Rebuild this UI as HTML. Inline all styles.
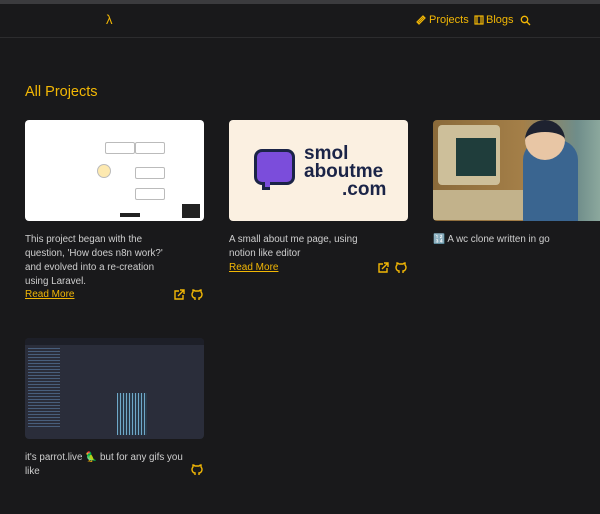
<!DOCTYPE html>
<html><head><style>
*{margin:0;padding:0;box-sizing:border-box}
body{width:600px;height:514px;background:#19191b;font-family:"Liberation Sans",sans-serif;overflow:hidden;position:relative;color:#c9c9c9}
.top{position:absolute;left:0;top:0;width:600px;height:4px;background:#3b3b3e}
.hdr{position:absolute;left:0;top:37px;width:600px;height:1px;background:#2c2c2e}
.y{color:#f2b705}
.abs{position:absolute}
.nav{font-size:11px;top:14px}
h1{position:absolute;left:25px;top:84px;font-size:14.5px;font-weight:normal;color:#f2b705}
.img{position:absolute;border-radius:4px;overflow:hidden}
.desc{position:absolute;font-size:9.8px;line-height:14px;color:#cfcfcf}
.rm{color:#f2b705;text-decoration:underline;font-size:10px;position:absolute}
svg.ic{position:absolute}
</style></head><body>
<div class="top"></div>
<div class="abs y" style="left:106px;top:12px;font-size:13px">λ</div>
<svg class="ic" style="left:416px;top:15px" width="10" height="10" viewBox="0 0 10 10" fill="none" stroke="#f2b705" stroke-width="1.2"><path d="M2 8 L8 2 M1 7 L3 9 L9 3 L7 1 Z"/></svg>
<div class="abs nav y" style="left:429px">Projects</div>
<svg class="ic" style="left:474px;top:15px" width="10" height="10" viewBox="0 0 10 10" fill="none" stroke="#f2b705" stroke-width="1.2"><rect x="1" y="1" width="8" height="8"/><path d="M3 1V9M7 1V9"/></svg>
<div class="abs nav y" style="left:486px">Blogs</div>
<svg class="ic" style="left:520px;top:15px" width="11" height="11" viewBox="0 0 11 11" fill="none" stroke="#f2b705" stroke-width="1.3"><circle cx="4.5" cy="4.5" r="3.2"/><path d="M7 7L10 10"/></svg>
<div class="hdr"></div>
<h1>All Projects</h1>

<div class="img" style="left:25px;top:120px;width:179px;height:101px;background:#fff">
 <div class="abs" style="left:80px;top:22px;width:30px;height:12px;border:1px solid #bbb;border-radius:2px"></div>
 <div class="abs" style="left:110px;top:47px;width:30px;height:12px;border:1px solid #bbb;border-radius:2px"></div>
 <div class="abs" style="left:110px;top:68px;width:30px;height:12px;border:1px solid #bbb;border-radius:2px"></div>
 <div class="abs" style="left:110px;top:22px;width:30px;height:12px;border:1px solid #bbb;border-radius:2px"></div>
 <div class="abs" style="left:72px;top:44px;width:14px;height:14px;border:1px solid #bbb;border-radius:50%;background:#fde9b0"></div>
 <div class="abs" style="left:157px;top:84px;width:18px;height:14px;background:#222"></div>
 <div class="abs" style="left:95px;top:93px;width:20px;height:4px;background:#222"></div>
</div>
<div class="desc" style="left:25px;top:233px;width:143px">This project began with the question, 'How does n8n work?' and evolved into a re-creation using Laravel.</div>
<div class="rm" style="left:25px;top:289px">Read More</div>
<svg class="ic" style="left:173px;top:289px" width="12" height="12" viewBox="0 0 12 12" fill="none" stroke="#f2b705" stroke-width="1.4"><path d="M6 2H2V10H10V6M7 1H11V5M11 1L5 7"/></svg>
<svg class="ic" style="left:191px;top:289px" width="12" height="12" viewBox="0 0 12 12" fill="none" stroke="#f2b705" stroke-width="1.4"><path d="M4 11V9C2 9 1 7 1 5.5 1 4 2 3 2 3 2 2 2 1 2 1 3 1 4 2 4 2H8C8 2 9 1 10 1 10 1 10 2 10 3 10 3 11 4 11 5.5 11 7 10 9 8 9V11"/></svg>

<div class="img" style="left:229px;top:120px;width:179px;height:101px;background:#fbf0e1">
 <div class="abs" style="left:25px;top:29px;width:41px;height:36px;background:#7b4ddb;border:3px solid #1b2447;border-radius:8px"></div>
 <div class="abs" style="left:33px;top:62px;width:8px;height:8px;background:#7b4ddb;border-left:3px solid #1b2447;border-bottom:3px solid #1b2447"></div>
 <div class="abs" style="left:75px;top:25px;font-size:19px;font-weight:bold;line-height:18px;color:#1b2447">smol<br>aboutme<br><span style="padding-left:38px">.com</span></div>
</div>
<div class="desc" style="left:229px;top:233px;width:143px">A small about me page, using notion like editor</div>
<div class="rm" style="left:229px;top:262px">Read More</div>
<svg class="ic" style="left:377px;top:262px" width="12" height="12" viewBox="0 0 12 12" fill="none" stroke="#f2b705" stroke-width="1.4"><path d="M6 2H2V10H10V6M7 1H11V5M11 1L5 7"/></svg>
<svg class="ic" style="left:395px;top:262px" width="12" height="12" viewBox="0 0 12 12" fill="none" stroke="#f2b705" stroke-width="1.4"><path d="M4 11V9C2 9 1 7 1 5.5 1 4 2 3 2 3 2 2 2 1 2 1 3 1 4 2 4 2H8C8 2 9 1 10 1 10 1 10 2 10 3 10 3 11 4 11 5.5 11 7 10 9 8 9V11"/></svg>

<div class="img" style="left:433px;top:120px;width:180px;height:101px;background:linear-gradient(90deg,#8a6a3a,#a47f48 50%,#6f8d8a 80%,#9cb7a8)">
 <div class="abs" style="left:5px;top:5px;width:62px;height:60px;background:#cdbf9a;border-radius:4px"></div>
 <div class="abs" style="left:23px;top:18px;width:40px;height:38px;background:#1f3d3b"></div>
 <div class="abs" style="left:0;top:70px;width:100px;height:30px;background:#c2b28b"></div>
 <div class="abs" style="left:90px;top:20px;width:55px;height:81px;background:#3a6590;border-radius:20px 20px 0 0"></div>
 <div class="abs" style="left:92px;top:0;width:40px;height:40px;background:#e8c6a5;border-radius:50%;border-top:12px solid #1e2230"></div>
</div>
<div class="desc" style="left:433px;top:233px;width:170px">🔢 A wc clone written in go</div>

<div class="img" style="left:25px;top:338px;width:179px;height:101px;background:#2a2d3a">
 <div class="abs" style="left:0;top:0;width:179px;height:7px;background:#1d1f28"></div>
 <div class="abs" style="left:3px;top:10px;width:32px;height:80px;background:repeating-linear-gradient(#5c7fa8 0 1px,transparent 1px 3px);opacity:.6"></div>
 <div class="abs" style="left:92px;top:55px;width:30px;height:42px;background:repeating-linear-gradient(90deg,#6fa8c8 0 1px,#2a3a4a 1px 3px)"></div>
</div>
<div class="desc" style="left:25px;top:451px;width:170px">it's parrot.live 🦜 but for any gifs you like</div>
<svg class="ic" style="left:191px;top:464px" width="12" height="12" viewBox="0 0 12 12" fill="none" stroke="#f2b705" stroke-width="1.4"><path d="M4 11V9C2 9 1 7 1 5.5 1 4 2 3 2 3 2 2 2 1 2 1 3 1 4 2 4 2H8C8 2 9 1 10 1 10 1 10 2 10 3 10 3 11 4 11 5.5 11 7 10 9 8 9V11"/></svg>
</body></html>
